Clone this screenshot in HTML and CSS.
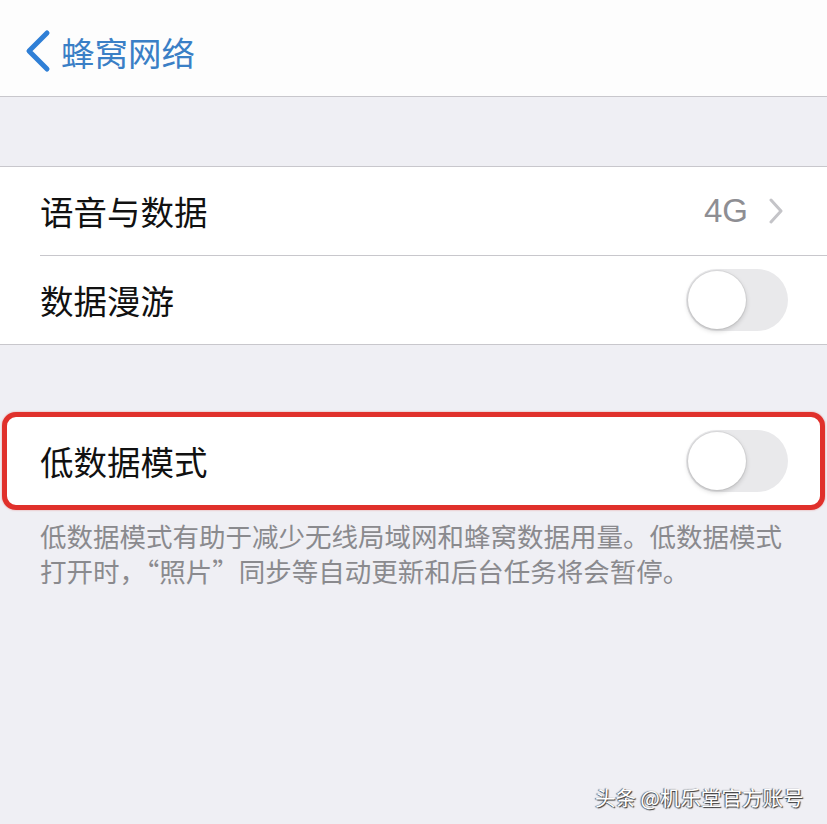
FILE: index.html
```html
<!DOCTYPE html>
<html lang="zh-CN">
<head>
    <meta charset="UTF-8">
    <meta name="viewport" content="width=device-width, initial-scale=1.0">
    <title>蜂窝网络</title>
    <link rel="stylesheet" href="styles.css">
</head>
<body>

    <header class="nav">
        <svg class="back" width="30" height="48" viewBox="0 0 30 48">
            <polyline points="22,4 4,22 22,40" fill="none" stroke="#2f7fd6" stroke-width="5" stroke-linecap="round" stroke-linejoin="round"/>
        </svg>
        <span class="nav-title">蜂窝网络</span>
    </header>

    <div class="spacer"></div>

    <section class="group">
        <div class="row">
            <span class="label">语音与数据</span>
            <span class="detail">4G</span>
            <svg class="disclosure" width="16" height="26" viewBox="0 0 16 26">
                <polyline points="3,2 13,13 3,24" fill="none" stroke="#c4c4c8" stroke-width="3" stroke-linecap="round" stroke-linejoin="round"/>
            </svg>
        </div>
        <div class="row">
            <span class="label">数据漫游</span>
            <span class="toggle"><span class="knob"></span></span>
        </div>
    </section>

    <div class="spacer short"></div>

    <section class="group marked">
        <div class="row">
            <span class="label">低数据模式</span>
            <span class="toggle"><span class="knob"></span></span>
        </div>
    </section>

    <p class="footnote">低数据模式有助于减少无线局域网和蜂窝数据用量。低数据模式打开时，“照片”同步等自动更新和后台任务将会暂停。</p>

    <div class="watermark">头条 @机乐堂官方账号</div>

</body>
</html>
```

FILE: styles.css
```css
body {
    margin: 0;
    padding: 0;
    background-color: #efeff4;
    font-family: "Noto Sans CJK SC", "Noto Sans", sans-serif;
    color: #111;
    height: 824px;
    overflow: hidden;
    position: relative;
}
.nav {
    height: 88px;
    padding-top: 8px;
    background-color: #fdfdfd;
    border-bottom: 1px solid #c8c7cc;
    display: flex;
    align-items: center;
    padding-left: 25px;
    box-sizing: content-box;
}
.back {
    margin-top: 2px;
}
.nav-title {
    font-size: 33.5px;
    color: #3a7fc6;
    margin-left: 6px;
    line-height: 1;
}
.spacer {
    height: 69px;
}
.spacer.short {
    height: 67px;
}
.group {
    background-color: #fff;
    border-top: 1px solid #c8c7cc;
    border-bottom: 1px solid #c8c7cc;
}
.row {
    height: 88px;
    display: flex;
    align-items: center;
    padding: 0 39px 0 40px;
    position: relative;
}
.row + .row {
    border-top: 1px solid #c8c7cc;
    margin-left: 40px;
    padding-left: 0;
}
.label {
    font-size: 33.5px;
    line-height: 1;
    flex: 1;
}
.detail {
    font-size: 33px;
    color: #8e8e93;
    font-family: "Liberation Sans", Arial, sans-serif;
    margin-right: 20px;
}
.disclosure {
    margin-right: 4px;
}
.toggle {
    width: 102px;
    height: 62px;
    border-radius: 31px;
    background-color: #e9e9eb;
    position: relative;
}
.knob {
    position: absolute;
    left: 2px;
    top: 2px;
    width: 58px;
    height: 58px;
    border-radius: 50%;
    background-color: #fff;
    box-shadow: 0 2px 5px rgba(0, 0, 0, 0.18), 0 0 0 1px rgba(0, 0, 0, 0.05);
}
.group.marked {
    border: 5px solid #e0302b;
    border-radius: 14px;
    margin: 0 2px;
    box-shadow: 0 0 2px rgba(224, 48, 43, 0.5);
}
.group.marked .row {
    padding-left: 33px;
    padding-right: 32px;
}
.footnote {
    margin: 0;
    padding: 8px 40px 0 40px;
    font-size: 26.5px;
    line-height: 35px;
    color: #8a8a8e;
}
.watermark {
    position: absolute;
    left: 595px;
    top: 782px;
    font-size: 20.5px;
    color: #fff;
    text-shadow: 1px 1px 1px #333, -1px 0 1px #555;
    white-space: nowrap;
}
```
